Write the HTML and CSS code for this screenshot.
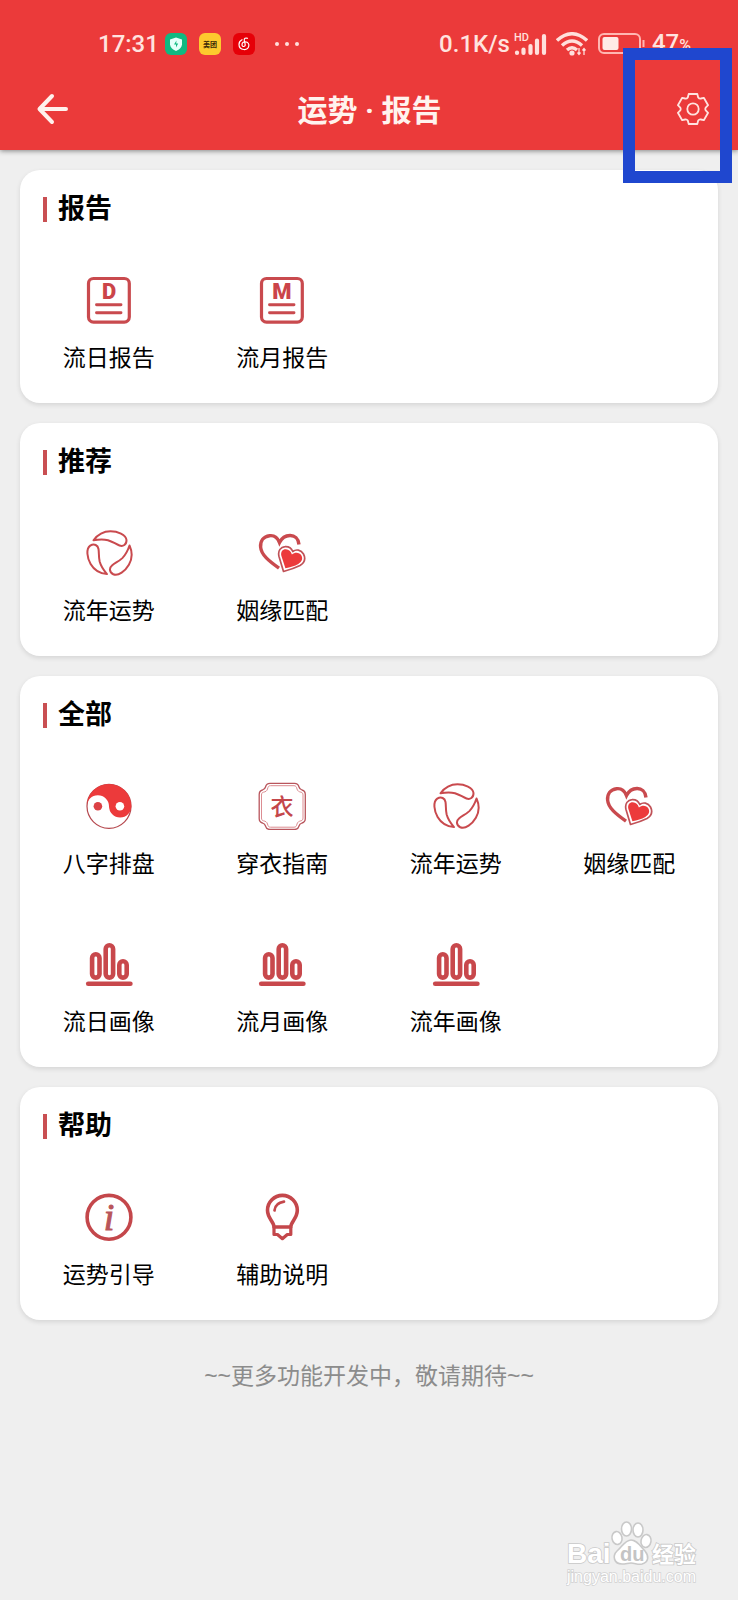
FILE: index.html
```html
<!DOCTYPE html>
<html lang="zh-CN">
<head>
<meta charset="utf-8">
<meta name="viewport" content="width=device-width, initial-scale=1">
<title>运势 · 报告</title>
<link rel="stylesheet" href="styles.css">
</head>
<body>
<svg class="sprite" aria-hidden="true">
  <symbol id="swirl" viewBox="0 0 48 48">
    <g fill="none" stroke="#c94a4e" stroke-width="2" stroke-linejoin="round">
      <path id="drop" d="M8.500 11.300C13 5 19 2.200 25.500 2.200C32.500 2.200 41 5.500 41.500 11C41.700 15.800 38 17.800 34.500 16.500C30.500 15 28 12.800 23 11.200C18.500 10 13.500 10.300 8.500 11.300Z"/>
      <use href="#drop" transform="rotate(120 25 24.300)"/>
      <use href="#drop" transform="rotate(240 25 24.300)"/>
    </g>
  </symbol>
  <symbol id="hearts" viewBox="0 0 48 48">
    <path d="M41 15.500C40.500 9.500 36.500 6.400 32 6.500C27 6.600 23.500 9.500 21.500 13.500C19.500 8.500 15.500 6.200 11.500 6.700C5.500 7.400 2.200 12 2.600 18C3.200 26 11 32 21 39.200" fill="none" stroke="#c94a4e" stroke-width="3.400"/>
    <path d="M25.500 42.500L21 27.500C19.500 21.500 23 17.800 27 17.600C31 17.300 33.500 19.500 34.800 22.500C38 20 43 20.500 45.500 25C48 30 46 34 42 36.500C37 39 31 41 25.500 42.500Z" fill="#fff" stroke="#c05258" stroke-width="1.700" stroke-linejoin="round"/>
    <path d="M27.400 39.300L23.400 27C22.400 23 24.600 20.300 27.600 20.300C30.800 20.200 32.900 22.300 33.900 25.600C37 22.900 41.500 23.200 43.400 26.600C45.200 30.200 43.600 33 40.300 34.900C36.600 36.900 32.300 38.200 27.400 39.300Z" fill="#ec3a3b"/>
  </symbol>
  <symbol id="bars" viewBox="0 0 48 48">
    <g fill="none" stroke="#c8484c" stroke-width="4.600">
      <rect x="7.100" y="14.300" width="7.400" height="23.300" rx="3.700"/>
      <rect x="20.700" y="5.300" width="7.400" height="32.300" rx="3.700"/>
      <rect x="34.300" y="21.300" width="7.400" height="16.300" rx="3.700"/>
      <path d="M3.200 43.700H45.400" stroke-linecap="round"/>
    </g>
  </symbol>
  <symbol id="page" viewBox="0 0 48 48">
    <g fill="none" stroke="#c94a4e" stroke-width="3.200">
      <rect x="3.500" y="2.500" width="40.800" height="43.600" rx="5"/>
      <path d="M11.500 28.700H36M11.500 36.700H36" stroke-width="2.900" stroke-linecap="round"/>
    </g>
  </symbol>
</svg>

<header class="topbar">
  <div class="status">
    <span>17:31</span>
    <span class="badges">
      <svg width="22" height="22" viewBox="0 0 22 22"><rect width="22" height="22" rx="6" fill="#10b981"/><path d="M11 4.500L17 6.500V11.500Q16.500 15.500 11 18Q5.500 15.500 5 11.500V6.500Z" fill="#e4fffa"/><path d="M11.500 7.500L9 11.500H11V14.500L13.200 10.500H11.200Z" fill="#10b981"/></svg>
      <svg width="22" height="22" viewBox="0 0 22 22"><rect width="22" height="22" rx="6" fill="#fdca2e"/><text x="11" y="14" text-anchor="middle" class="tiny">美团</text></svg>
      <svg width="22" height="22" viewBox="0 0 22 22"><rect width="22" height="22" rx="6" fill="#e60008"/><path d="M14.500 5.300C12.500 4.600 11 5.500 11.300 7.200L12.200 11.500C12.600 14 9 14.300 9 11.700C9 9.500 11 8.600 12.600 8.800C15 9 16.200 11 15.800 13C15.300 15.500 13 16.700 10.800 16.500C7.800 16.200 6 14 6 11.500C6 9.300 7.300 7.500 9 6.700" fill="none" stroke="#fff" stroke-width="1.200" stroke-linecap="round"/></svg>
    </span>
    <svg class="more" width="24" height="22" viewBox="0 0 24 22" fill="#ffe0dc"><circle cx="2" cy="11" r="2"/><circle cx="12" cy="11" r="2"/><circle cx="22" cy="11" r="2"/></svg>
    <span class="speed">0.1K/s</span>
    <svg class="signal" width="34" height="24" viewBox="0 0 34 24" fill="#ffe0dc"><text x="0" y="9" class="hd">HD</text><path d="M3 20.500V21M9.500 17.500V21M16.500 14V21M23 8.500V21M30 4V21" fill="none" stroke="#ffe0dc" stroke-width="4.200" stroke-linecap="round"/></svg>
    <svg class="wifi" width="32" height="24" viewBox="0 0 32 24"><g fill="none" stroke="#ffe0dc" stroke-width="3.400"><path d="M1 8.500Q16 -5 31 8.500"/><path d="M6 13.500Q16 4.500 26 13.500"/><path d="M11 18Q16 13.500 21 18"/></g><circle cx="16" cy="21" r="2.600" fill="#ffe0dc"/><path d="M23 16V22M21.500 20.500L23 22.500L24.500 20.500M28 23V17M26.500 18.500L28 16.500L29.500 18.500" fill="none" stroke="#ffe0dc" stroke-width="1.300"/></svg>
    <svg class="battery" width="48" height="22" viewBox="0 0 48 22"><rect x="1" y="1" width="41" height="19" rx="5" fill="none" stroke="#ffb7b2" stroke-width="2"/><rect x="4.500" y="4" width="16" height="13" rx="2" fill="#ffeae6"/><path d="M45.500 7V14" stroke="#ffb7b2" stroke-width="2"/></svg>
    <span class="charge">47<small>%</small></span>
  </div>
  <div class="nav">
    <button class="nav-button" type="button" aria-label="返回">
      <svg width="32" height="32" viewBox="0 0 32 32" fill="none" stroke="#fff1ec" stroke-width="4" stroke-linecap="round" stroke-linejoin="round"><path d="M16 3L3.500 16L16 29M4 16H30"/></svg>
    </button>
    <h1>运势 · 报告</h1>
    <button class="nav-button" type="button" aria-label="设置">
      <svg width="34" height="34" viewBox="-17 -17 34 34" fill="none" stroke="#ffe3df" stroke-width="1.800" stroke-linejoin="round"><path d="M-4.300 -15H4.300L5.200 -11.600Q6.200 -10.200 7.800 -10.500L10.800 -11.200L15.100 -3.800L12.700 -1.400Q11.800 0 12.700 1.400L15.100 3.800L10.800 11.200L7.800 10.500Q6.200 10.200 5.200 11.600L4.300 15H-4.300L-5.200 11.600Q-6.200 10.200 -7.800 10.500L-10.800 11.200L-15.100 3.800L-12.700 1.400Q-11.800 0 -12.700 -1.400L-15.100 -3.800L-10.800 -11.200L-7.800 -10.500Q-6.200 -10.200 -5.200 -11.600Z"/><circle r="5.700"/></svg>
    </button>
  </div>
  <div class="highlight"></div>
</header>

<main>
  <section class="card">
    <h2>报告</h2>
    <nav class="grid">
      <a href="#day-report"><svg class="icon" viewBox="0 0 48 48"><use href="#page"/><text x="24" y="23" class="letter">D</text></svg><span>流日报告</span></a>
      <a href="#month-report"><svg class="icon" viewBox="0 0 48 48"><use href="#page"/><text x="24" y="23" class="letter">M</text></svg><span>流月报告</span></a>
    </nav>
  </section>

  <section class="card">
    <h2>推荐</h2>
    <nav class="grid">
      <a href="#year"><svg class="icon"><use href="#swirl"/></svg><span>流年运势</span></a>
      <a href="#match"><svg class="icon"><use href="#hearts"/></svg><span>姻缘匹配</span></a>
    </nav>
  </section>

  <section class="card">
    <h2>全部</h2>
    <nav class="grid">
      <a href="#bazi"><svg class="icon" viewBox="0 0 48 48"><circle cx="24" cy="24.300" r="22" fill="#fff" stroke="#b5484e" stroke-width="1.200"/><path d="M1.700 24.300A22.300 22.300 0 0 1 46.300 24.300A11.150 11.150 0 0 1 24 24.300A11.150 11.150 0 0 0 1.700 24.300Z" fill="#ec3a3b"/><circle cx="12.900" cy="24.300" r="4.300" fill="#dc4145"/><circle cx="34.900" cy="24.300" r="4.300" fill="#fff"/></svg><span>八字排盘</span></a>
      <a href="#dress"><svg class="icon" viewBox="0 0 48 48"><g fill="none"><path d="M12 1.300H36.500C39 1.300 40.500 3 41 5C41.500 7 42.500 7.500 44 8C46 8.500 47.300 10 47.300 12.500V36.500C47.300 39 46 40.500 44 41C42.500 41.500 41.500 42 41 44C40.500 46 39 47.500 36.500 47.500H12C9.500 47.500 8 46 7.500 44C7 42 6 41.500 4.500 41C2.500 40.500 1.200 39 1.200 36.500V12.500C1.200 10 2.500 8.500 4.500 8C6 7.500 7 7 7.500 5C8 3 9.500 1.300 12 1.300Z" stroke="#b9555c" stroke-width="1.300"/><path d="M12.500 3.700H36C38 3.700 38.500 5 39 7C39.500 9 41 9.800 43 10.200C44.500 10.500 45 11.500 45 13V36C45 37.500 44.500 38.500 43 38.800C41 39.200 39.500 40 39 42C38.500 44 38 45.200 36 45.200H12.500C10.500 45.200 10 44 9.500 42C9 40 7.500 39.200 5.500 38.800C4 38.500 3.500 37.500 3.500 36V13C3.500 11.500 4 10.500 5.500 10.200C7.500 9.800 9 9 9.500 7C10 5 10.500 3.700 12.500 3.700Z" stroke="#dc8d92" stroke-width="1"/></g><text x="24" y="33" class="yi">衣</text></svg><span>穿衣指南</span></a>
      <a href="#year"><svg class="icon"><use href="#swirl"/></svg><span>流年运势</span></a>
      <a href="#match"><svg class="icon"><use href="#hearts"/></svg><span>姻缘匹配</span></a>
      <a href="#day-portrait"><svg class="icon"><use href="#bars"/></svg><span>流日画像</span></a>
      <a href="#month-portrait"><svg class="icon"><use href="#bars"/></svg><span>流月画像</span></a>
      <a href="#year-portrait"><svg class="icon"><use href="#bars"/></svg><span>流年画像</span></a>
    </nav>
  </section>

  <section class="card">
    <h2>帮助</h2>
    <nav class="grid">
      <a href="#guide"><svg class="icon" viewBox="0 0 48 48"><circle cx="24" cy="24.300" r="21.900" fill="none" stroke="#c4474b" stroke-width="3.600"/><text x="24" y="37" class="info">i</text></svg><span>运势引导</span></a>
      <a href="#notes"><svg class="icon" viewBox="0 0 48 48"><g fill="none" stroke="#c4474b" stroke-width="3.600" stroke-linejoin="round"><path d="M16 34C16 28.500 9.500 25.500 9.500 17.300A14.900 14.900 0 0 1 39.300 17.300C39.300 25.500 32.800 28.500 32.800 34Z"/><path d="M16 34V41.500H19.500L24.400 45.700L29.300 41.500H32.800V34" stroke-width="3.200"/><path d="M16.500 17.500Q17.200 10 26 8.700" stroke-width="2.700" stroke-linecap="round"/></g></svg><span>辅助说明</span></a>
    </nav>
  </section>

  <p class="notice">~~更多功能开发中，敬请期待~~</p>
</main>

<footer>
  <svg class="watermark" width="136" height="72" viewBox="0 0 136 72" role="img" aria-label="Baidu 经验">
    <g fill="#fff" stroke="#c9c9c9" stroke-width="1.600">
      <text x="1" y="43" class="brand">Bai</text>
      <ellipse cx="51" cy="18" rx="5" ry="6.500" transform="rotate(-10 51 18)"/>
      <ellipse cx="60.500" cy="9" rx="5" ry="7"/>
      <ellipse cx="72" cy="10" rx="5" ry="7"/>
      <ellipse cx="80" cy="21" rx="5" ry="6.500" transform="rotate(10 80 21)"/>
      <path d="M65 20C59 20 56 27 51 31C46 36 48 44 56 44C60 44 62 43 65 43C69 43 72 45 76 44C83 42 83 36 79 31C74 26 71 20 65 20Z"/>
      <text x="86" y="42" class="brand-cn">经验</text>
    </g>
    <text x="54" y="41" class="du">du</text>
    <text x="1" y="62" class="site">jingyan.baidu.com</text>
  </svg>
</footer>
</body>
</html>
```
FILE: styles.css
```css
* {
  box-sizing: border-box;
}

body {
  margin: 0;
  min-height: 100vh;
  display: flex;
  flex-direction: column;
  background: #efefef;
  color: #000;
  font-family: Roboto, "Noto Sans CJK SC", sans-serif;
}

svg {
  display: block;
  flex: none;
}

.sprite {
  position: absolute;
  width: 0;
  height: 0;
}

.topbar {
  position: relative;
  padding-top: 28px;
  background: #eb3a3a;
  box-shadow: 0 1px 5px rgba(0, 0, 0, 0.45);
}

.status {
  display: flex;
  align-items: center;
  height: 32px;
  padding: 0 47px 0 98px;
  color: #ffe3df;
  font-size: 24px;
  font-weight: 500;
  line-height: 32px;
}

.badges {
  display: flex;
  gap: 12px;
  margin-left: 6px;
}

.more {
  margin-left: 20px;
}

.speed {
  margin-left: auto;
}

.signal {
  margin-left: 4px;
}

.wifi {
  margin-left: 8px;
}

.battery {
  margin-left: 10px;
}

.charge {
  margin-left: 6px;
}

.charge small {
  font-size: 16px;
}

.tiny {
  font-size: 7px;
  font-weight: 700;
  fill: #3b2a08;
}

.hd {
  font-size: 11px;
  font-weight: 500;
}

.nav {
  display: grid;
  grid-template-columns: 64px 1fr 64px;
  align-items: center;
  height: 90px;
  padding: 8px 13px 0 20px;
}

.nav h1 {
  margin: 0;
  padding: 4px 6px 0 0;
  color: #fff3ee;
  font-size: 30px;
  line-height: 40px;
  font-weight: 700;
  text-align: center;
}

.nav-button {
  display: flex;
  align-items: center;
  justify-content: center;
  height: 64px;
  padding: 0;
  border: 0;
  background: none;
  cursor: pointer;
}

.highlight {
  position: absolute;
  top: 48px;
  right: 6px;
  width: 109px;
  height: 135px;
  border: 12px solid #1f47cf;
  pointer-events: none;
}

main {
  display: flex;
  flex-direction: column;
  gap: 20px;
  padding: 20px;
}

.card {
  border-radius: 20px;
  background: #fff;
  box-shadow: 0 2px 5px rgba(0, 0, 0, 0.11);
}

.card h2 {
  display: flex;
  align-items: center;
  gap: 11px;
  margin: 0;
  padding: 23px 23px 20px;
  font-size: 27px;
  line-height: 32px;
  font-weight: 700;
}

.card h2::before {
  content: "";
  width: 4px;
  height: 25px;
  background: #c94f52;
}

.grid {
  display: grid;
  grid-template-columns: repeat(4, 1fr);
  padding: 0 2px;
}

.grid a {
  display: flex;
  flex-direction: column;
  align-items: center;
  gap: 20px;
  padding: 31px 0 29px;
  color: inherit;
  font-size: 23px;
  line-height: 30px;
  text-decoration: none;
}

.icon {
  width: 48px;
  height: 48px;
}

.letter {
  font: 900 22px Roboto, sans-serif;
  text-anchor: middle;
  fill: #cb4449;
}

.yi {
  font: 500 23px "Noto Sans CJK SC", sans-serif;
  text-anchor: middle;
  fill: #c4474b;
}

.info {
  font: italic 400 38px "Liberation Serif", serif;
  text-anchor: middle;
  fill: #b9555a;
  stroke: #b9555a;
  stroke-width: 1px;
}

.notice {
  margin: 20px 0 0;
  color: #8c8c8c;
  font-family: "Liberation Sans", "Noto Sans CJK SC", sans-serif;
  font-size: 23px;
  line-height: 32px;
  text-align: center;
}

footer {
  display: flex;
  justify-content: flex-end;
  margin-top: auto;
  padding: 0 36px 8px 0;
}

.watermark text {
  paint-order: stroke;
}

.brand {
  font: 700 28px "Liberation Sans", sans-serif;
}

.brand-cn {
  font: 700 22px "Noto Sans CJK SC", sans-serif;
}

.du {
  font: 700 20px "Liberation Sans", sans-serif;
  fill: #c4c4c4;
}

.site {
  font: 400 16px "Liberation Sans", sans-serif;
  fill: #fff;
  stroke: #d2d2d2;
  stroke-width: 1.5px;
}
```
